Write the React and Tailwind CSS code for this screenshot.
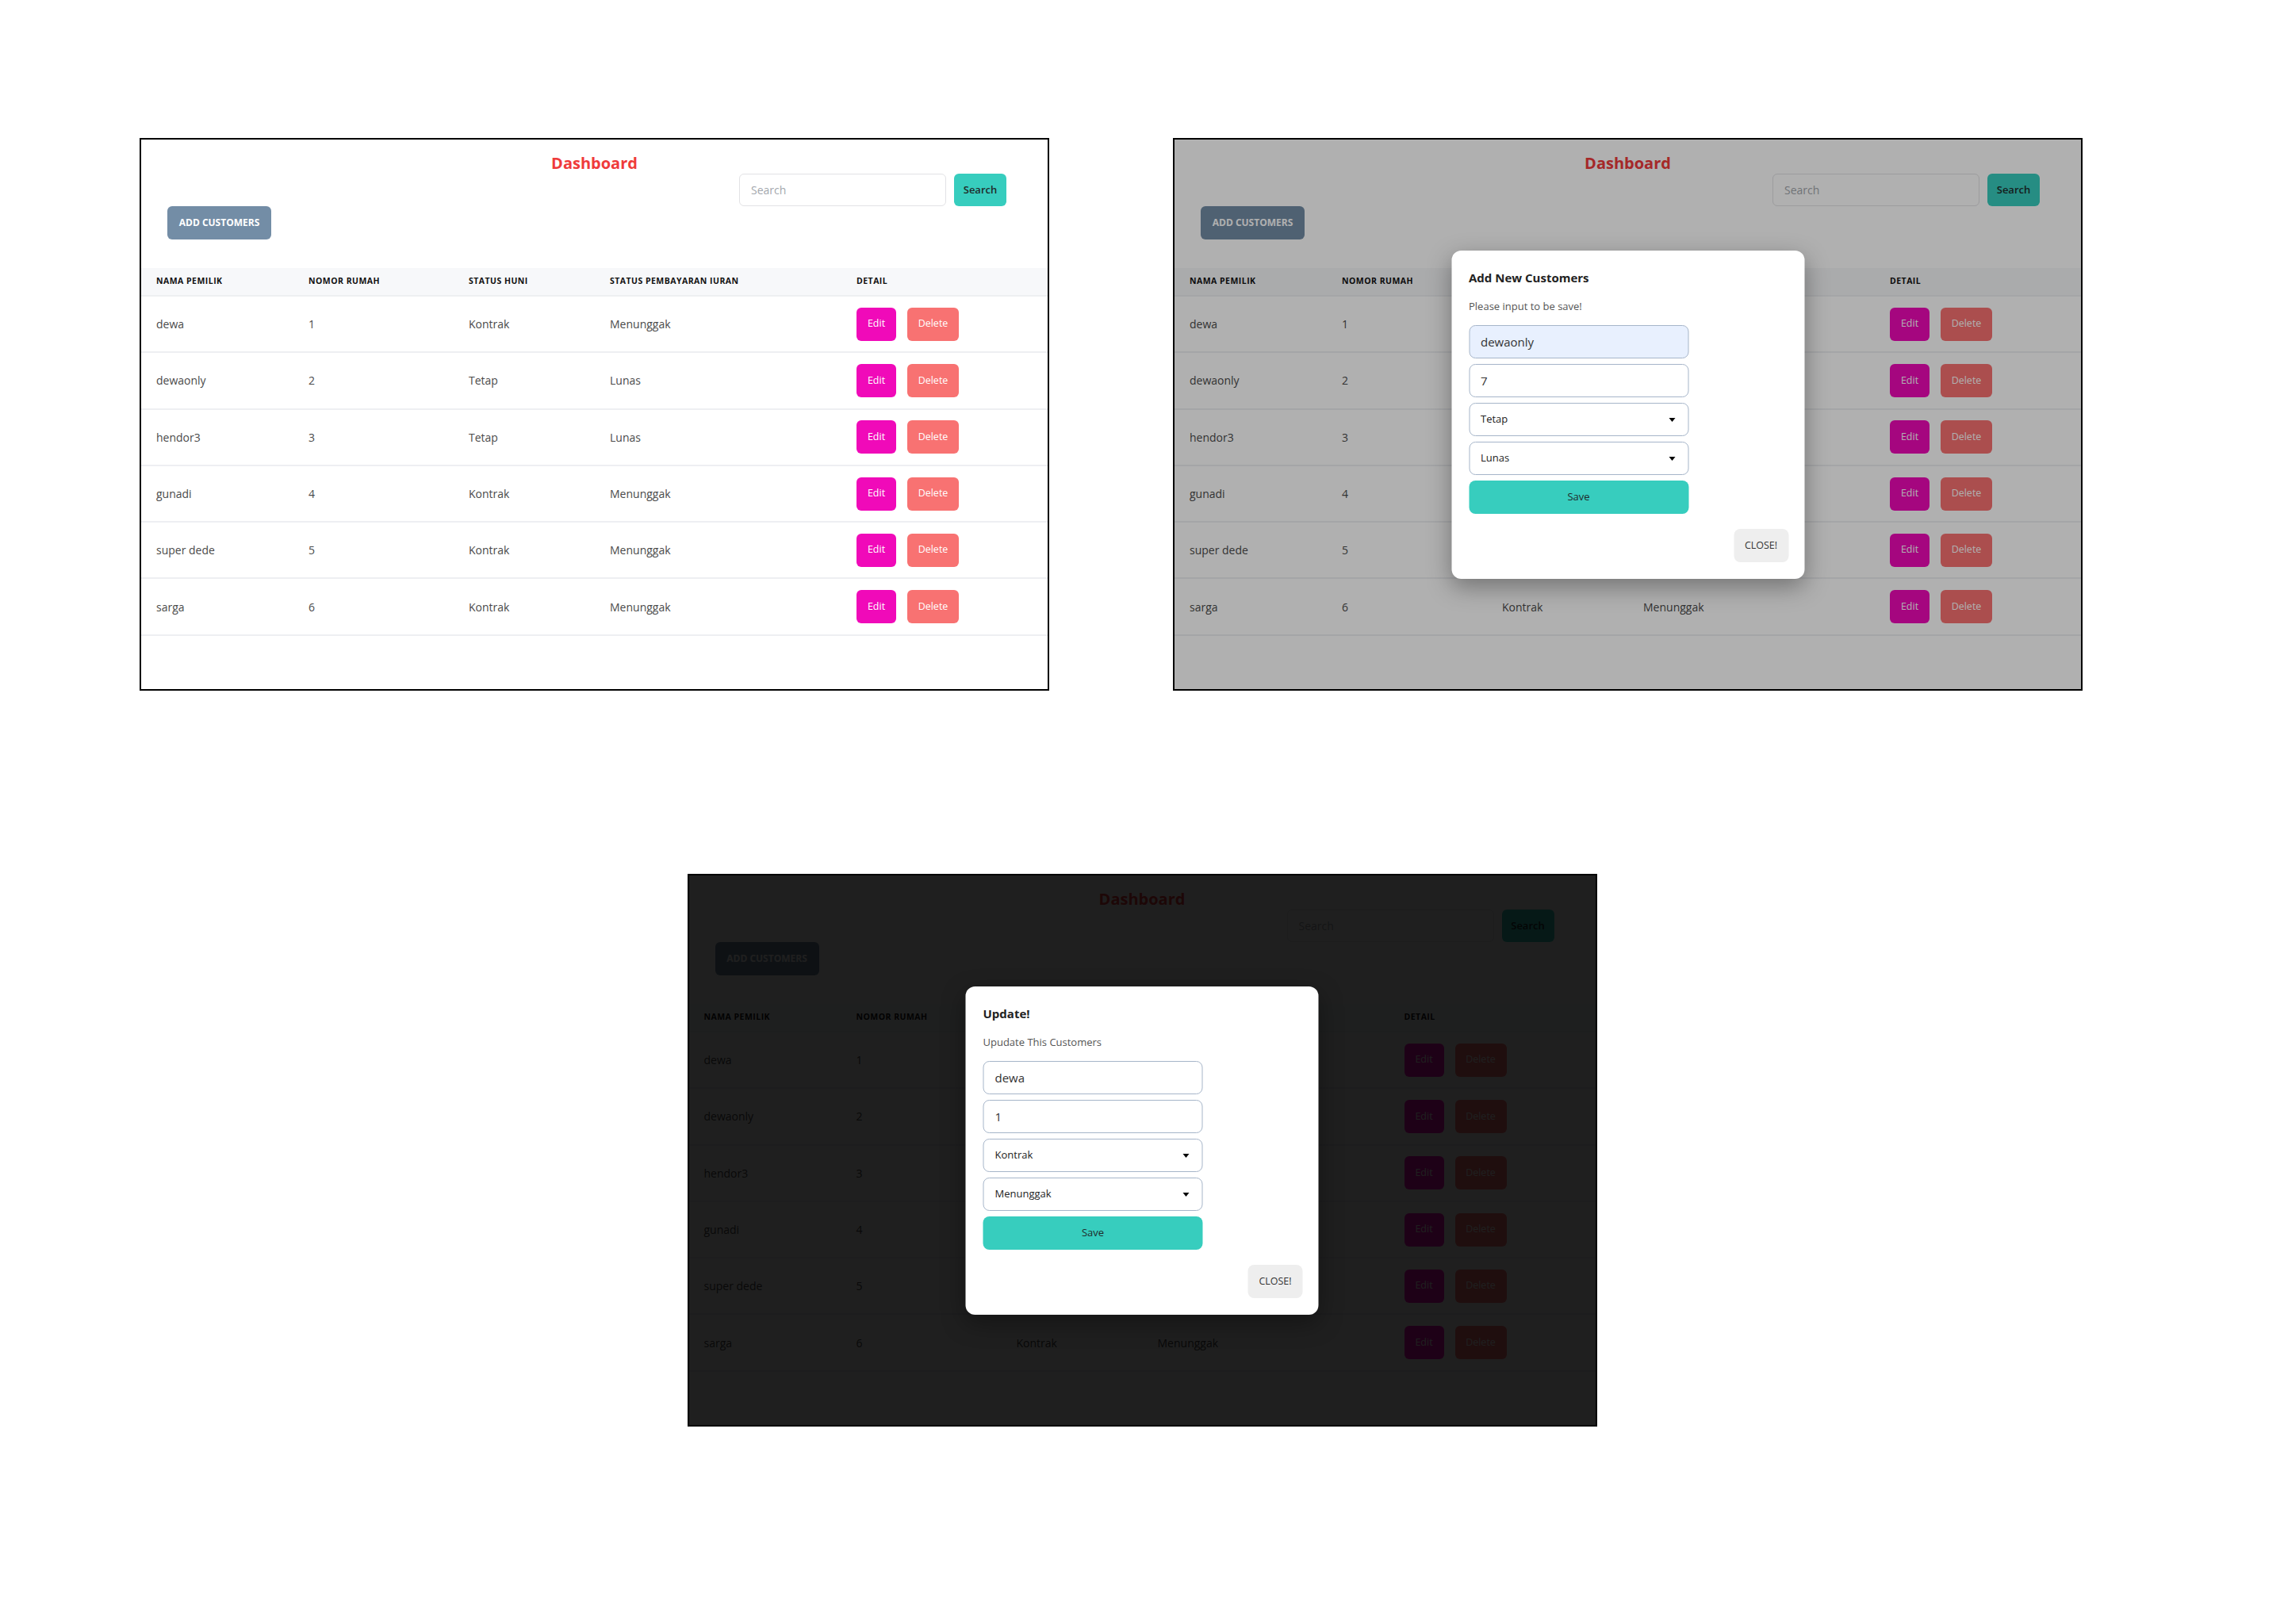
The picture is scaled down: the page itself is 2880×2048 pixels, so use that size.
import React from "react";

const rows = [
  ["dewa", "1", "Kontrak", "Menunggak"],
  ["dewaonly", "2", "Tetap", "Lunas"],
  ["hendor3", "3", "Tetap", "Lunas"],
  ["gunadi", "4", "Kontrak", "Menunggak"],
  ["super dede", "5", "Kontrak", "Menunggak"],
  ["sarga", "6", "Kontrak", "Menunggak"],
];

const cols = "grid grid-cols-[192px_202px_178px_311px_1fr]";

function Dashboard() {
  return (
    <div className="flex flex-col">
      <div className="h-[43px] pt-[16px] text-center text-[20px] leading-[28px] font-bold text-[#ef3b3b]">
        Dashboard
      </div>
      <div className="flex justify-end gap-[10px] pr-[52px] h-[41px]">
        <input
          readOnly
          placeholder="Search"
          className="w-[261px] h-[41px] rounded-md border border-[#e2e2e5] bg-white px-[14px] text-[14px] placeholder:text-[#a3a7ad] outline-none"
        />
        <button className="w-[66px] h-[41px] rounded-md bg-[#37cdbe] text-[13px] font-semibold text-[#1f2a2a]">
          Search
        </button>
      </div>
      <div className="pl-[33px] flex">
        <button className="w-[131px] h-[42px] rounded-md bg-[#738da6] text-[12px] font-bold text-white">
          ADD CUSTOMERS
        </button>
      </div>

      {/* Table */}
      <div className="mt-[36px]">
        <div className={`${cols} h-[36px] items-center bg-[#f7f8fa] border-b-2 border-[#eef0f2] text-[10.5px] font-bold tracking-[0.045em] text-[#111]`}>
          <div className="pl-[19px]">NAMA PEMILIK</div>
          <div className="pl-[19px]">NOMOR RUMAH</div>
          <div className="pl-[19px]">STATUS HUNI</div>
          <div className="pl-[19px]">STATUS PEMBAYARAN IURAN</div>
          <div className="pl-[19px]">DETAIL</div>
        </div>
        {rows.map((r) => (
          <div
            key={r[0]}
            className={`${cols} h-[71.3px] items-center border-b-2 border-[#eeeff2] text-[14px] text-[#4a4a4a]`}
          >
            <div className="pl-[19px]">{r[0]}</div>
            <div className="pl-[19px]">{r[1]}</div>
            <div className="pl-[19px]">{r[2]}</div>
            <div className="pl-[19px]">{r[3]}</div>
            <div className="pl-[19px] flex gap-[14px]">
              <button className="w-[50px] h-[42px] rounded-md bg-[#f00ab9] text-[12.5px] font-medium text-white">
                Edit
              </button>
              <button className="w-[65px] h-[42px] rounded-md bg-[#f87272] text-[12.5px] font-medium text-white">
                Delete
              </button>
            </div>
          </div>
        ))}
      </div>
    </div>
  );
}

function Caret() {
  return (
    <span className="w-0 h-0 border-l-[4px] border-r-[4px] border-t-[5px] border-l-transparent border-r-transparent border-t-black" />
  );
}

function Modal({ title, subtitle, name, number, huni, bayar, autofill }) {
  const field = "w-[277px] h-[42px] rounded-lg border border-[#a6b5c9] px-[14px] flex items-center";
  return (
    <div className="absolute top-[140px] left-1/2 -translate-x-1/2 w-[445px] h-[414px] rounded-[12px] bg-white shadow-[0_10px_30px_rgba(0,0,0,0.35)] pt-[22px] pl-[22px] pr-[20px] pb-[21px] flex flex-col">
      <div className="text-[15px] leading-[24px] font-bold text-[#222]">{title}</div>
      <div className="mt-[14px] text-[13px] leading-[20px] text-[#555]">{subtitle}</div>
      <div className="mt-[14px] flex flex-col gap-[7px]">
        <div className={`${field} text-[15px] text-[#333] ${autofill ? "bg-[#e8f0fe]" : "bg-white"}`}>{name}</div>
        <div className={`${field} text-[15px] text-[#333] bg-white`}>{number}</div>
        <div className={`${field} justify-between pr-[16px] text-[13px] text-[#222] bg-white`}>
          <span>{huni}</span>
          <Caret />
        </div>
        <div className={`${field} justify-between pr-[16px] text-[13px] text-[#222] bg-white`}>
          <span>{bayar}</span>
          <Caret />
        </div>
        <button className="w-[277px] h-[42px] rounded-lg bg-[#37cdbe] text-[13px] font-medium text-[#1f2a2a]">
          Save
        </button>
      </div>
      <div className="mt-auto flex justify-end">
        <button className="w-[69px] h-[42px] rounded-lg bg-[#eeeeee] text-[12.5px] font-medium text-[#333]">
          CLOSE!
        </button>
      </div>
    </div>
  );
}

function Panel({ overlay, children }) {
  return (
    <div className="relative w-[1147px] h-[697px] border-2 border-black bg-white overflow-hidden">
      <Dashboard />
      {overlay && <div className={`absolute inset-0 ${overlay}`} />}
      {children}
    </div>
  );
}

export default function App() {
  return (
    <div className="w-[2880px] h-[2048px] bg-white [font-family:'Open_Sans',sans-serif]">
      <div className="flex pt-[174px] pl-[176px] gap-[156px]">
        <Panel />
        <Panel overlay="bg-black/[0.31]">
          <Modal
            title="Add New Customers"
            subtitle="Please input to be save!"
            name="dewaonly"
            number="7"
            huni="Tetap"
            bayar="Lunas"
            autofill
          />
        </Panel>
      </div>
      <div className="flex justify-center mt-[231px]">
        <Panel overlay="bg-black/[0.88]">
          <Modal
            title="Update!"
            subtitle="Upudate This Customers"
            name="dewa"
            number="1"
            huni="Kontrak"
            bayar="Menunggak"
          />
        </Panel>
      </div>
    </div>
  );
}
